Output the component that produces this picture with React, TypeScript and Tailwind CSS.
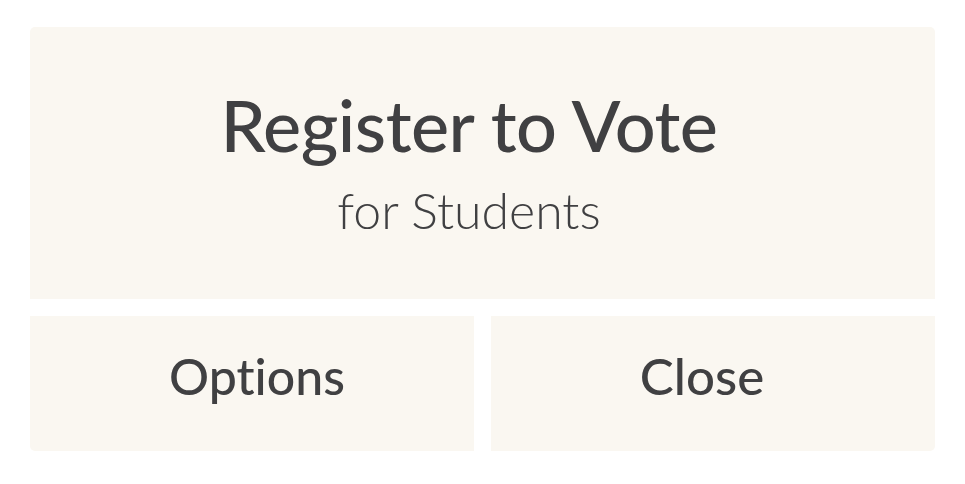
export default function App() {
  return (
    <div className="min-h-screen bg-white px-[30px] pt-[27px] text-[#404042] font-['Lato','Open_Sans',sans-serif] [font-variant-ligatures:none]">
      <div className="flex w-[905px] flex-col gap-[17px]">
        <div className="flex h-[272px] flex-col items-center justify-center rounded-t-[5px] bg-[#faf7f1] pr-[27px] pb-[4px]">
          <h1 className="text-[72px] font-medium leading-none tracking-[-0.5px]">Register to Vote</h1>
          <p className="mt-[25px] text-[50px] font-light leading-none">for Students</p>
        </div>
        <div className="grid grid-cols-2 gap-[17px]">
          <button className="flex h-[135px] items-center justify-center rounded-bl-[5px] bg-[#faf7f1] pl-[10px] pb-[14px] text-[50px] font-medium">
            Options
          </button>
          <button className="flex h-[135px] items-center justify-center rounded-br-[5px] bg-[#faf7f1] pr-[22px] pb-[14px] text-[51px] font-medium">
            Close
          </button>
        </div>
      </div>
    </div>
  );
}
